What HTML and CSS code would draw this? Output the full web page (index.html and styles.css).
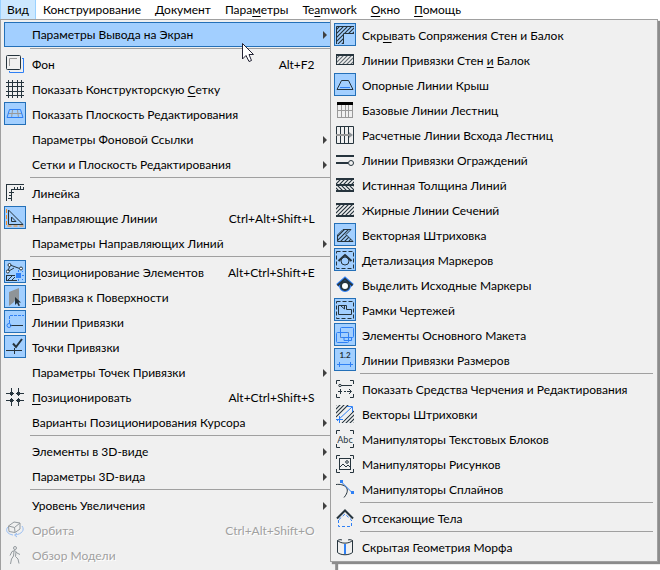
FILE: index.html
```html
<!DOCTYPE html>
<html lang="ru">
<head>
  <meta charset="UTF-8" />
  <meta name="viewport" content="width=device-width, initial-scale=1.0" />
  <title>Меню Вид</title>
  <link rel="stylesheet" href="styles.css">
</head>

<body>

  <!-- штриховка для иконок -->
  <svg class="defs" width="0" height="0" aria-hidden="true">
    <defs>
      <pattern id="hatch" width="4" height="4" patternUnits="userSpaceOnUse">
        <path d="M-1 1 L1 -1 M0 4 L4 0 M3 5 L5 3" stroke="#26343d" stroke-width="1.2" />
      </pattern>
      <pattern id="hatchBack" width="4" height="4" patternUnits="userSpaceOnUse">
        <path d="M-1 3 L1 5 M0 0 L4 4 M3 -1 L5 1" stroke="#26343d" stroke-width="1.2" />
      </pattern>
    </defs>
  </svg>

  <nav class="menubar">
    <button class="active">Вид</button>
    <button>Конструирование</button>
    <button>Документ</button>
    <button>Пара<u>м</u>етры</button>
    <button>Te<u>a</u>mwork</button>
    <button><u>О</u>кно</button>
    <button><u>П</u>омощь</button>
  </nav>

  <main class="workspace">
    <div class="menu" role="menu">
      <button class="item open"><span class="icon"></span><span class="label">Параметры Вывода на Экран</span><span class="arrow"></span></button>
      <hr>
      <button class="item">
        <svg class="icon" viewBox="0 0 18 18"><path class="blue" d="M17.5 3 V17.5 H3.5 V16 M16 3.5 H17.5" /><rect class="dark" x=".5" y=".5" width="14" height="14" rx="1" /><path class="grey" d="M3.5 11 V3.5 H11" /></svg>
        <span class="label">Фон</span><span class="key">Alt+F2</span>
      </button>
      <button class="item">
        <svg class="icon crisp" viewBox="0 0 18 18"><path class="dark" d="M2.5 0 V18 M6.5 0 V18 M11.5 0 V18 M15.5 0 V18 M0 2.5 H18 M0 6.5 H18 M0 11.5 H18 M0 15.5 H18" /></svg>
        <span class="label">Показать Конструкторскую <u>С</u>етку</span>
      </button>
      <button class="item on">
        <svg class="icon" viewBox="0 0 18 18"><path class="grey" d="M6.5 5 L5.5 13 M11.5 5 L12.5 13 M2 8.5 H16" /><path class="blue" d="M3.5 4.5 H14.5 L17 12.5 H1 Z" /></svg>
        <span class="label">Показать Плоскость Редактирования</span>
      </button>
      <button class="item"><span class="icon"></span><span class="label">Параметры Фоновой Ссылки</span><span class="arrow"></span></button>
      <button class="item"><span class="icon"></span><span class="label">Сетки и Плоскость Редактирования</span><span class="arrow"></span></button>
      <hr>
      <button class="item">
        <svg class="icon crisp" viewBox="0 0 18 18"><path class="dark" d="M.5 17 V.5 H18 M5.5 17 V5.5 H18 M8.5 5 V3 M11.5 5 V3 M14.5 5 V2 M17.5 5 V3 M5 8.5 H3 M5 11.5 H3 M5 14.5 H2 M6 8.5 H8" /></svg>
        <span class="label">Линейка</span>
      </button>
      <button class="item on">
        <svg class="icon" viewBox="0 0 18 18"><path class="orange" d="M.5 0 V17 H18" stroke-dasharray="4 2" /><path class="dark" d="M2.5 1 V15.5 H17 Z M5.5 8 V12.5 H10 Z" /></svg>
        <span class="label">Направляющие Линии</span><span class="key">Ctrl+Alt+Shift+L</span>
      </button>
      <button class="item"><span class="icon"></span><span class="label">Параметры Направляющих Линий</span><span class="arrow"></span></button>
      <hr>
      <button class="item on">
        <svg class="icon" viewBox="0 0 18 18"><path class="dark" d="M2 8.5 L4 2 L15 6 M2 8.5 L8 5 M0 12.5 H9 M0 17.5 H11 M.5 12.5 V17.5 M2 17 L6 13 M6 17 L9 14" /><g class="dark paper"><circle cx="3.5" cy="2" r="1.5" /><circle cx="1.8" cy="8.5" r="1.5" /><circle cx="15" cy="5.5" r="1.5" /></g><rect class="fill-blue" x="10" y="10" width="5" height="5" /><path class="blue" d="M12.5 7 V9 M12.5 16 V18 M16 12.5 H18 M16 9 L17 8 M16 16 L17 17" /></svg>
        <span class="label"><u>П</u>озиционирование Элементов</span><span class="key">Alt+Ctrl+Shift+E</span>
      </button>
      <button class="item on">
        <svg class="icon" viewBox="0 0 18 18"><path class="fill-grey" d="M3 4 L13 0 V14 L9 12 L8 14 L3 18 Z" /><path class="fill-dark" d="M9 9 L15 14.5 H12.5 L14 17.5 L12.5 18 L11 15 L9 17 Z" /></svg>
        <span class="label"><u>П</u>ривязка к Поверхности</span>
      </button>
      <button class="item on">
        <svg class="icon" viewBox="0 0 18 18"><path class="blue" d="M3.5 10 V2.5 H18" stroke-dasharray="3 1" /><path class="dark" d="M4 12.5 H17" /><circle class="blue" cx="3" cy="12.5" r="2" /></svg>
        <span class="label">Линии Привязки</span>
      </button>
      <button class="item on">
        <svg class="icon" viewBox="0 0 18 18"><path class="dark" d="M0 12.5 H16 M8.5 10 V16" /><path class="thick" d="M7 5.5 L10 9 L16 1" /></svg>
        <span class="label">Точки Привязки</span>
      </button>
      <button class="item"><span class="icon"></span><span class="label">Параметры Точек Привязки</span><span class="arrow"></span></button>
      <button class="item">
        <svg class="icon crisp" viewBox="0 0 18 18"><path class="dark" d="M0 5.5 H18 M0 12.5 H18 M5.5 0 V18 M12.5 0 V18" stroke-dasharray="8 2" /><path class="fill-dark" d="M4 4 h3 v3 h-3 Z M11 4 h3 v3 h-3 Z M4 11 h3 v3 h-3 Z M11 11 h3 v3 h-3 Z" /></svg>
        <span class="label"><u>П</u>озиционировать</span><span class="key">Alt+Ctrl+Shift+S</span>
      </button>
      <button class="item"><span class="icon"></span><span class="label">Варианты Позиционирования Курсора</span><span class="arrow"></span></button>
      <hr>
      <button class="item"><span class="icon"></span><span class="label">Элементы в 3D-виде</span><span class="arrow"></span></button>
      <button class="item"><span class="icon"></span><span class="label">Параметры 3D-вида</span><span class="arrow"></span></button>
      <hr>
      <button class="item"><span class="icon"></span><span class="label">Уровень Увеличения</span><span class="arrow"></span></button>
      <button class="item" disabled>
        <svg class="icon" viewBox="0 0 18 18"><path class="blue" d="M2 6 C-1 9 1 13 7 14 M16 5 C19 9 16 13 9 14 M11 12 L8.5 14 L11 16" /><path class="dark" d="M2.5 5 L8 1 L14 2 V8 L9 11.5 L3 10.5 Z M2.5 5 L8.5 6.5 L14 2 M8.5 6.5 L9 11" /></svg>
        <span class="label">Орбита</span><span class="key">Ctrl+Alt+Shift+O</span>
      </button>
      <button class="item" disabled>
        <svg class="icon" viewBox="0 0 18 18"><circle class="dark" cx="9" cy="2" r="1.5" /><path class="dark" d="M4 9.5 L6 5.5 L9 4.5 L11 7 L14 8.5 M8 5 L7.5 10 L5.5 13 L4.5 18 M10 6 L9.5 10.5 L12 13 L13 17.5" /></svg>
        <span class="label">Обзор Модели</span>
      </button>
    </div>

    <div class="menu submenu" role="menu">
      <button class="item on">
        <svg class="icon" viewBox="0 0 18 18"><path d="M0 0 H18 V7 H7 V18 H0 Z" fill="url(#hatch)" /><path class="dark" d="M.5 18 V.5 H18 M7.5 18 V7.5 H18" /></svg>
        <span class="label">Скр<u>ы</u>вать Сопряжения Стен и Балок</span>
      </button>
      <button class="item">
        <svg class="icon crisp" viewBox="0 0 18 18"><rect x="0" y="4" width="18" height="10" fill="url(#hatch)" opacity=".7" /><rect class="dark" x=".5" y="4.5" width="17" height="9" /><path class="thick" d="M0 4 H18" /></svg>
        <span class="label">Линии Привязки Стен <u>и</u> Балок</span>
      </button>
      <button class="item on">
        <svg class="icon" viewBox="0 0 18 18"><path class="dark" d="M5.5 4.5 H12.5 L17 13.5 H1 Z" /><path class="blue" d="M4 11.5 H14" /></svg>
        <span class="label">Опорные Линии Крыш</span>
      </button>
      <button class="item">
        <svg class="icon crisp" viewBox="0 0 18 18"><path class="grey" d="M1.5 4 V16.5 H16.5 V4 M5.5 4 V16 M9.5 4 V16 M12.5 4 V16 M1 9.5 H16" /><path class="heavy" d="M1 2.5 H17" /></svg>
        <span class="label">Базовые Линии Лестниц</span>
      </button>
      <button class="item">
        <svg class="icon" viewBox="0 0 18 18"><path class="dark" d="M.5 .5 H17.5 V17.5 H.5 Z M4.5 0 V18 M8.5 0 V18 M12.5 0 V18" /><path class="grey" d="M0 9 H15" stroke-width="2" /><path class="fill-grey" d="M13 6 L17 9 L13 12 Z" /></svg>
        <span class="label">Расчетные Линии Всхода Лестниц</span>
      </button>
      <button class="item">
        <svg class="icon" viewBox="0 0 18 18"><path class="thick" d="M0 5 H18 M0 12 H12" /><circle class="dark" cx="15" cy="12" r="2.5" /></svg>
        <span class="label">Линии Привязки Ограждений</span>
      </button>
      <button class="item">
        <svg class="icon" viewBox="0 0 18 18"><rect x="0" y="3" width="18" height="6" fill="url(#hatch)" /><rect x="0" y="10" width="18" height="5" fill="url(#hatchBack)" /><path class="thick" d="M0 3 H18 M0 9 H18 M0 15 H18" /></svg>
        <span class="label">Истинная Толщина Линий</span>
      </button>
      <button class="item">
        <svg class="icon" viewBox="0 0 18 18"><rect x="0" y="4" width="18" height="10" fill="url(#hatch)" /><path class="thick" d="M0 3 H18 M0 15 H18" /></svg>
        <span class="label">Жирные Линии Сечений</span>
      </button>
      <button class="item on">
        <svg class="icon" viewBox="0 0 18 18"><path d="M7 3.5 H15 L10 8.5 L17 15.5 H1.5 V9 Z" fill="url(#hatch)" /><path class="dark" d="M7 3.5 H15 L10 8.5 L17 15.5 H1.5 V9 Z" /></svg>
        <span class="label">Векторная Штриховка</span>
      </button>
      <button class="item on">
        <svg class="icon" viewBox="0 0 18 18"><rect class="dark" x=".5" y=".5" width="17" height="17" stroke-dasharray="4 2" /><circle class="dark" cx="9" cy="10" r="4" /><path class="thick" d="M2.5 10 L9 4 L15.5 10" /></svg>
        <span class="label">Детализация Маркеров</span>
      </button>
      <button class="item">
        <svg class="icon" viewBox="0 0 18 18"><path class="halo" d="M1.5 9.5 L9 3 L16.5 9.5" /><circle class="halo" cx="9" cy="10" r="4" /><path class="thick" d="M1.5 9.5 L9 3 L16.5 9.5" /><circle class="thick paper" cx="9" cy="10" r="4" /></svg>
        <span class="label">Выделить Исходные Маркеры</span>
      </button>
      <button class="item on">
        <svg class="icon" viewBox="0 0 18 18"><rect class="dark" x=".5" y=".5" width="17" height="17" stroke-dasharray="4 2" /><path class="dark" d="M2.5 4.5 H10.5 V8.5 H15.5 V13.5 H2.5 Z M5 5 L8.5 8 V5" /></svg>
        <span class="label">Рамки Чертежей</span>
      </button>
      <button class="item on">
        <svg class="icon" viewBox="0 0 18 18"><rect class="grey" x="4.5" y="6.5" width="8" height="5" /><rect class="blue" x="4.5" y="1.5" width="13" height="10" rx="1" /><rect class="blue" x=".5" y="6.500" width="12" height="10" rx="1" /><path class="blue" d="M8 12 V14.5 H15.5 V12" /></svg>
        <span class="label">Элементы Основного Макета</span>
      </button>
      <button class="item on">
        <svg class="icon" viewBox="0 0 18 18"><text x="9" y="7" class="digits">1.2</text><path class="blue" d="M1 13.5 H17 M3.5 11 V16 M14.5 11 V16" /></svg>
        <span class="label">Линии Привязки Размеров</span>
      </button>
      <hr>
      <button class="item">
        <svg class="icon" viewBox="0 0 18 18"><path class="dark" d="M.5 4 V.5 H4 M14 .5 H17.5 V4 M.5 14 V17.5 H4 M14 17.5 H17.5 V14 M5 5.5 H16 M2 11.5 H6 M4.5 9 V14 M8 11.5 H10 M11 11.5 H15 M13 9 L15.5 11.5 L13 14" /><circle class="dark" cx="4" cy="5.5" r="1.2" /></svg>
        <span class="label">Показать Средства Черчения и Редактирования</span>
      </button>
      <button class="item">
        <svg class="icon" viewBox="0 0 18 18"><path d="M0 0 H14 L0 13 Z M18 5 V18 H5 Z" fill="url(#hatch)" /><path class="blue" d="M1 16 L16 2 M11 1.5 H16.5 V7 M0 14.5 H7 M3.5 11 V18" /></svg>
        <span class="label">Векторы Штриховки</span>
      </button>
      <button class="item">
        <svg class="icon" viewBox="0 0 18 18"><path class="dark" d="M.5 4 V.5 H4 M14 .5 H17.5 V4 M.5 14 V17.5 H4 M14 17.5 H17.5 V14" /><text x="9" y="13" class="letters">Abc</text></svg>
        <span class="label">Манипуляторы Текстовых Блоков</span>
      </button>
      <button class="item">
        <svg class="icon" viewBox="0 0 18 18"><path class="dark" d="M.5 4 V.5 H4 M14 .5 H17.5 V4 M.5 14 V17.5 H4 M14 17.5 H17.5 V14 M3 13 L7 9 L10 12 L12 10 L15 13" /><rect class="dark" x="3.5" y="3.5" width="11" height="11" /><circle class="dark" cx="11" cy="7" r="1.3" /></svg>
        <span class="label">Манипуляторы Рисунков</span>
      </button>
      <button class="item">
        <svg class="icon" viewBox="0 0 18 18"><path class="dark" d="M0 4.5 C8 3.5 16 8 8 17.5" /><path class="blue" d="M5 1.5 L16 12.5" /><path class="fill-blue" d="M4 0 h3 v3 h-3 Z M15 11 h3 v3 h-3 Z" /></svg>
        <span class="label">Манипуляторы Сплайнов</span>
      </button>
      <hr>
      <button class="item">
        <svg class="icon" viewBox="0 0 18 18"><path class="blue" d="M2.5 11 V17.5 H15.5 V11 L9 5 Z" stroke-dasharray="3 2" /><path class="thick" d="M1 9.5 L9 1.5 L17 9.5" /></svg>
        <span class="label">Отсекающие Тела</span>
      </button>
      <hr>
      <button class="item">
        <svg class="icon" viewBox="0 0 18 18"><path class="dark" d="M1.5 2.5 V14.5 C5 17.5 13 17.5 16.5 14.5 V2.5 C13 6 5 6 1.5 2.5 C3 1.5 5 1.5 6 2 M16.5 2.5 C15 1.5 13 1.5 12 2" /><path class="blue" d="M9 6 V16" stroke-width="2" /></svg>
        <span class="label">Скрытая Геометрия Морфа</span>
      </button>
    </div>

    <svg class="cursor" viewBox="0 0 13 20"><path d="M.5 .5 V16 L4 12.5 L7 18.5 L9.5 17.5 L7 11.5 H11.5 Z" /></svg>
  </main>

</body>
</html>
```
FILE: styles.css
```css
* {
  margin: 0;
  padding: 0;
  box-sizing: border-box;
}

body {
  height: 100vh;
  display: flex;
  flex-direction: column;
  overflow: hidden;
  font-family: Lato, 'Open Sans', sans-serif;
  font-size: 12px;
  line-height: 16px;
  color: #000;
  background-color: #fff;
}

button {
  font: inherit;
  color: inherit;
  background: none;
  border: none;
  text-align: left;
}

u {
  text-underline-offset: 2px;
}

.defs {
  position: absolute;
}

/* строка меню */
.menubar {
  display: flex;
  height: 19px;
}

.menubar button {
  height: 19px;
  padding: 0 6px;
  border: 1px solid transparent;
  border-width: 0 1px;
  white-space: nowrap;
}

.menubar .active {
  background-color: #cce8ff;
  border-color: #99d1ff;
}

/* выпадающее меню */
.workspace {
  position: relative;
  flex: 1;
  padding-right: 2px;
}

.menu {
  width: 51%;
  padding: 2px 4px 2px 3px;
  background-color: #f0f0f0;
  border: 1px solid #a0a0a0;
  box-shadow: 2px 2px 1px #8c8c8c;
}

.menu hr {
  height: 1px;
  margin: 0 0 3px 26px;
  border: none;
  background-color: #a0a0a0;
}

.item {
  display: flex;
  width: 100%;
  height: 25px;
  line-height: 25px;
  white-space: nowrap;
}

.item.open {
  margin-bottom: 1px;
  background-color: #a2cfff;
  outline: 1px solid #2470b8;
  outline-offset: -1px;
}

.label {
  flex: 1;
  margin-left: 6px;
}

.key {
  margin-right: 16px;
}

.arrow {
  align-self: center;
  margin-right: 4px;
  border: 4px solid transparent;
  border-left: 4px solid #404040;
  border-right: none;
}

.item:disabled {
  color: #a0a0a0;
  text-shadow: 1px 1px 0 #fff;
}

.item:disabled .icon {
  opacity: 0.45;
}

/* меню второго уровня */
.submenu {
  position: absolute;
  top: 0;
  left: 50%;
  right: 2px;
  width: auto;
  padding-top: 3px;
  padding-bottom: 1px;
}

/* иконки */
.icon {
  flex: none;
  width: 22px;
  height: 23px;
  padding: 2px 1px 1px;
  border: 1px solid transparent;
}

.on .icon {
  background-color: #a2cfff;
  border-color: #2470b8;
}

.crisp {
  shape-rendering: crispEdges;
}

.dark,
.blue,
.grey,
.orange,
.thick,
.heavy,
.halo {
  fill: none;
  stroke: #26343d;
}

.blue {
  stroke: #2f80f5;
}

.grey {
  stroke: #999;
}

.orange {
  stroke: #f58a1f;
}

.thick {
  stroke-width: 2;
}

.heavy {
  stroke: #000;
  stroke-width: 3;
}

.halo {
  stroke: #2f80f5;
  stroke-width: 4;
}

.paper {
  fill: #fff;
}

.fill-dark {
  fill: #26343d;
}

.fill-blue {
  fill: #2f80f5;
}

.fill-grey {
  fill: #8f9498;
}

.digits,
.letters {
  fill: #26343d;
  font-size: 8px;
  font-weight: bold;
  text-anchor: middle;
}

.letters {
  font-size: 9px;
  font-weight: normal;
}

.cursor {
  position: absolute;
  top: 24px;
  left: 242px;
  width: 13px;
  height: 20px;
}

.cursor path {
  fill: #fff;
  stroke: #223;
}
```
